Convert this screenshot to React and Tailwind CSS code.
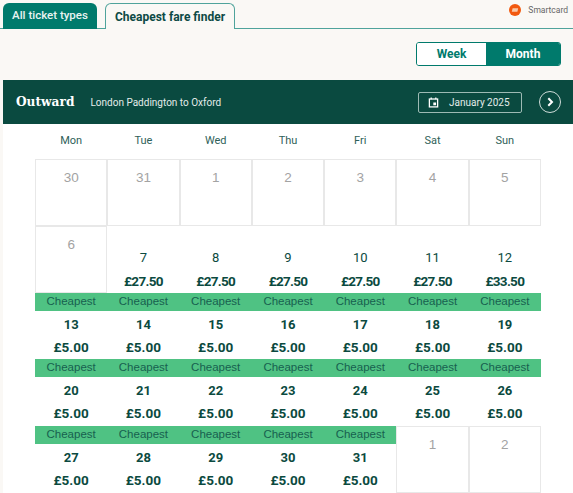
import React from 'react';

const days = ['Mon', 'Tue', 'Wed', 'Thu', 'Fri', 'Sat', 'Sun'];

const cells = [
    { day: 30 }, { day: 31 }, { day: 1 }, { day: 2 }, { day: 3 }, { day: 4 }, { day: 5 },
    { day: 6 },
    { day: 7, price: '£27.50' }, { day: 8, price: '£27.50' }, { day: 9, price: '£27.50' },
    { day: 10, price: '£27.50' }, { day: 11, price: '£27.50' }, { day: 12, price: '£33.50' },
    ...[13, 14, 15, 16, 17, 18, 19, 20, 21, 22, 23, 24, 25, 26, 27, 28, 29, 30, 31].map((day) => ({
        day,
        price: '£5.00',
        cheapest: true,
    })),
    { day: 1 }, { day: 2 },
];

const DayCell = ({ cell }) => {
    if (!cell.price) {
        return (
            <div className="border border-[#e8e8e8] h-full pt-[9px] text-center font-['Liberation_Sans',sans-serif] text-[13.5px] leading-[18px] text-[#a3a3a3]">
                {cell.day}
            </div>
        );
    }

    return (
        <div className={`flex flex-col h-full text-center text-[#0b4a40] ${cell.cheapest ? 'justify-start' : 'justify-end'}`}>
            {cell.cheapest && (
                <div className="h-[18px] bg-[#4fc283] font-['Liberation_Sans',sans-serif] text-[11.5px] leading-[16px] text-[#17604f]">Cheapest</div>
            )}
            <div className={`text-[13px] leading-[18px] ${cell.cheapest ? 'mt-[5px] font-bold' : 'font-normal'}`}>{cell.day}</div>
            <div className={`text-[13.5px] leading-[18px] font-bold ${cell.cheapest ? 'mt-[4px]' : 'mt-[5px] mb-[3px] tracking-[-0.7px]'}`}>{cell.price}</div>
        </div>
    );
};

export default function App() {
    return (
        <div className="w-[573px] h-[493px] overflow-hidden bg-[#faf8f5] font-['Roboto',sans-serif]">
            <div className="relative flex items-end gap-[8px] h-[29px] pl-[3px] border-b border-[#4fa39b]">
                <button className="w-[94px] h-[26px] -mb-px rounded-t-[6px] bg-[#007a6c] text-[11.5px] font-medium text-[#e8f3f1]">
                    All ticket types
                </button>
                <button className="w-[130px] h-[26px] -mb-px rounded-t-[6px] border border-b-0 border-[#4fa39b] bg-[#faf8f5] text-[12px] font-bold text-[#0e4a45]">
                    Cheapest fare finder
                </button>
                <div className="absolute right-[5px] top-[4px] flex items-center gap-[7px] text-[8.5px] text-[#666]">
                    <svg width="12" height="12" viewBox="0 0 12 12">
                        <circle cx="6" cy="6" r="6" fill="#f2590f" />
                        <path d="M3.6 4.2H9.2L8.4 7.8H2.8Z" fill="#f9c9a8" />
                    </svg>
                    Smartcard
                </div>
            </div>

            <div className="flex justify-end pt-[13px] pr-[12px] h-[51px]">
                <div className="flex w-[145px] h-[24px] rounded-[3px] border border-[#007a6c] overflow-hidden text-[12px] font-bold">
                    <div className="w-[69px] flex items-center justify-center bg-white text-[#007a6c]">Week</div>
                    <div className="flex-1 flex items-center justify-center bg-[#007a6c] text-white">Month</div>
                </div>
            </div>

            <div className="ml-[3px] flex items-center h-[44px] pl-[13px] pr-[12px] bg-[#0a4a40] text-white">
                <span className="font-['DejaVu_Serif',serif] text-[12.2px] font-bold">Outward</span>
                <span className="ml-[16px] text-[10px] text-[#e3ecea]">London Paddington to Oxford</span>
                <div className="ml-auto flex items-center w-[104px] h-[21px] pl-[9px] rounded-[2px] border border-[#9dbab4] text-[10px] text-[#e3ecea]">
                    <svg width="11" height="11" viewBox="0 0 12 12" fill="none" stroke="white" strokeWidth="1.4">
                        <rect x="1.5" y="2.2" width="9" height="8.6" />
                        <path d="M3.5 0.5v2M8.5 0.5v2" />
                        <rect x="5.8" y="6" width="3" height="3" fill="white" stroke="none" />
                    </svg>
                    <span className="ml-[10px]">January 2025</span>
                </div>
                <div className="ml-[17px] flex items-center justify-center w-[22px] h-[22px] rounded-full border border-[#cfdcd9]">
                    <svg width="10" height="10" viewBox="0 0 10 10" fill="none" stroke="white" strokeWidth="2">
                        <path d="M3.3 1.2L7 5L3.3 8.8" />
                    </svg>
                </div>
            </div>

            <div className="ml-[3px] h-[369px] bg-white">
                <div className="grid grid-cols-7 ml-[32px] w-[506px] h-[35px] items-center text-center text-[11px] text-[#2f5f59]">
                    {days.map((d) => (
                        <div key={d}>{d}</div>
                    ))}
                </div>
                <div className="grid grid-cols-7 grid-rows-5 ml-[32px] w-[506px] h-[334px]">
                    {cells.map((cell, i) => (
                        <DayCell key={i} cell={cell} />
                    ))}
                </div>
            </div>
        </div>
    );
}
